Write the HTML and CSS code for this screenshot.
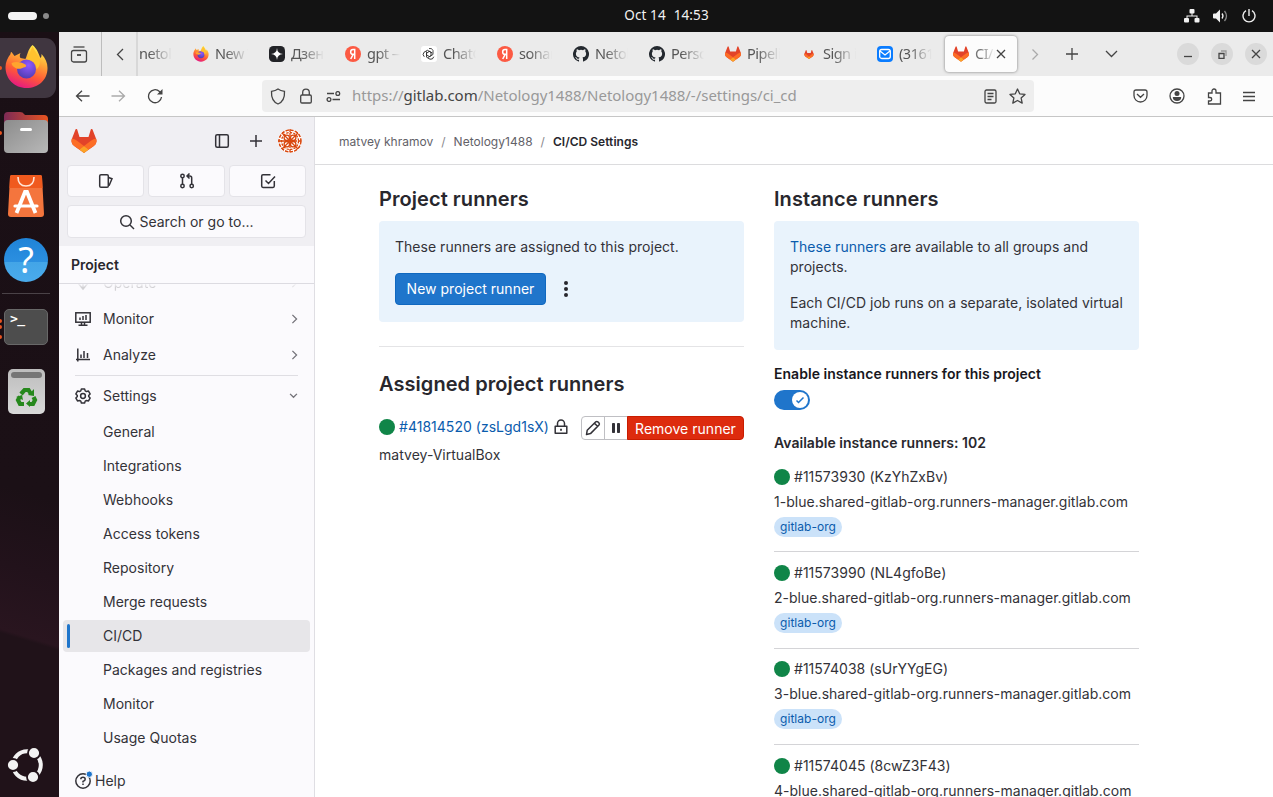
FILE: index.html
```html
<!DOCTYPE html>
<html lang="en">
<head>
<meta charset="utf-8">
<title>CI/CD Settings</title>
<link rel="stylesheet" href="styles.css">
</head>
<body>
<svg class="defs" width="0" height="0">
  <defs>
    <linearGradient id="flame" x1=".7" y1="0" x2=".3" y2="1"><stop offset="0" stop-color="#fff44f"/><stop offset=".35" stop-color="#ffa436"/><stop offset=".65" stop-color="#ff5a36"/><stop offset="1" stop-color="#e31587"/></linearGradient>
    <radialGradient id="globe" cx=".6" cy=".3" r=".8"><stop offset="0" stop-color="#9059ff"/><stop offset="1" stop-color="#4a3aa8"/></radialGradient>
    <linearGradient id="folder" x1="0" y1="0" x2="1" y2="1"><stop offset="0" stop-color="#8c8c8c"/><stop offset="1" stop-color="#b8b8b8"/></linearGradient>
    <linearGradient id="folderback"><stop offset="0" stop-color="#7d2a56"/><stop offset="1" stop-color="#e95420"/></linearGradient>
    <linearGradient id="bin" x1="0" y1="0" x2="0" y2="1"><stop offset="0" stop-color="#bdbdbd"/><stop offset="1" stop-color="#d9d9d9"/></linearGradient>
    <symbol id="firefox" viewBox="0 0 42 44">
      <path fill="url(#flame)" d="M27 0c5 4 6 9 8 13 1-1 1-2 1-4 4 4 6 9 6 14 0 12-9 20-21 20S0 34 0 22c0-5 2-9 5-13 0 0 0-2 1-2l3 4 6-3c-1 2-1 4 0 5l5 1c2-4 2-9 7-14z"/>
      <circle cx="21" cy="24" r="9.500" fill="url(#globe)"/>
      <path fill="#ffa52e" d="M6 18c4-2 10-1 13 1 2 1 2 2 1 3-4 1-6 3-10 1-2-1-4-3-4-5z"/>
      <path fill="#ffc22e" d="M20 14c5-4 5-9 7-13 2 5 5 8 7 13 1 4 0 8-3 10 0-6-4-9-11-10z"/>
    </symbol>
    <symbol id="gitlab" viewBox="0 0 25 24">
      <path fill="#e24329" d="M24.5 9.5 21 .5a.9.9 0 0 0-1.7.1L17 8H8L5.700.6A.9.9 0 0 0 4 .5L.5 9.500a6.500 6.500 0 0 0 2.200 7.500l9.800 7 9.800-7a6.500 6.500 0 0 0 2.200-7.500z"/>
      <path fill="#fc6d26" d="M24.500 9.500a12 12 0 0 0-4.700 2.100L12.500 17l4.700 3.600 5.100-3.600a6.500 6.500 0 0 0 2.200-7.500zM.5 9.500a12 12 0 0 1 4.700 2.100l7.300 5.400-4.700 3.600L2.700 17A6.500 6.500 0 0 1 .5 9.500z"/>
      <path fill="#fca326" d="m7.800 20.600 4.700 3.400 4.700-3.400-4.700-3.600z"/>
    </symbol>
    <symbol id="github" viewBox="0 0 16 16"><path fill="#24292f" d="M8 0a8 8 0 0 0-2.530 15.590c.4.070.55-.17.55-.38v-1.490c-2.230.48-2.700-.94-2.700-.94-.36-.92-.89-1.170-.89-1.170-.73-.5.060-.49.060-.49.800.060 1.230.83 1.230.83.710 1.220 1.870.87 2.330.66.070-.52.280-.87.500-1.070-1.770-.2-3.640-.890-3.640-3.950 0-.87.310-1.590.83-2.150-.09-.2-.36-1.020.07-2.120 0 0 .67-.21 2.200.82a7.600 7.600 0 0 1 4 0c1.530-1.040 2.200-.82 2.200-.82.440 1.100.160 1.920.080 2.120.51.560.82 1.270.82 2.150 0 3.070-1.870 3.750-3.650 3.950.29.250.54.730.54 1.480v2.200c0 .21.150.460.550.380A8 8 0 0 0 8 0z"/></symbol>
    <symbol id="yandex" viewBox="0 0 16 16"><circle cx="8" cy="8" r="8" fill="#fc5a43"/><path fill="none" stroke="#fff" stroke-width="1.500" d="M9.700 13V3.600H8a2.300 2.300 0 0 0 0 4.700h1.700M8.200 8.300 5.700 13"/></symbol>
    <symbol id="x" viewBox="0 0 10 10"><path d="m1 1 8 8M9 1 1 9"/></symbol>
    <symbol id="right" viewBox="0 0 8 12"><path d="m1.500 1 5 5-5 5"/></symbol>
    <symbol id="lock" viewBox="0 0 16 16"><rect x="2.700" y="7" width="10.600" height="8" rx="1.300"/><path d="M4.700 7V4.500a3.300 3.300 0 0 1 6.600 0V7"/></symbol>
  </defs>
</svg>
<div class="desktop">
  <header class="topbar">
    <div class="workspaces"><span class="pill"></span><span class="dot"></span></div>
    <div class="clock"><span>Oct 14</span><span>14:53</span></div>
    <div class="tray">
      <svg width="16" height="14" viewBox="0 0 16 14" fill="#f2f2f2"><rect x="5.500" y="0" width="5" height="4.500" rx="1"/><rect x="0" y="9" width="5" height="4.500" rx="1"/><rect x="10.500" y="9" width="5" height="4.500" rx="1"/><path d="M7.500 4h1v2.500h5V9h-1V7.500h-9V9h-1V6.500h5z"/></svg>
      <svg width="16" height="14" viewBox="0 0 16 14"><path fill="#f2f2f2" d="M1 4.500h2L7 .5v13l-4-4H1q-1 0-1-1v-3q0-1 1-1z"/><path fill="none" stroke="#f2f2f2" stroke-width="1.300" d="M9 4.500q2 2.500 0 5"/><path fill="none" stroke="#888" stroke-width="1.300" d="M11.500 2q4 5 0 10"/></svg>
      <svg width="14" height="14" viewBox="0 0 14 14" fill="none" stroke="#eee" stroke-width="1.400"><path d="M4 1.700a6 6 0 1 0 6 0M7 0v7"/></svg>
    </div>
  </header>
  <div class="main">
    <aside class="dock">
      <div class="app active"><svg width="43" height="44"><use href="#firefox"/></svg><i class="run"></i></div>
      <div class="app files"><svg width="44" height="42" viewBox="0 0 44 42"><path fill="url(#folderback)" d="M0 4q0-4 4-4h12q3 0 4 2l1 1h19q4 0 4 4v20H0z"/><rect x="0" y="8" width="44" height="33" rx="4" fill="url(#folder)"/><rect x="16" y="16" width="12" height="3" rx="1.500" fill="#fff"/></svg><i class="run"></i></div>
      <div class="app store"><svg width="36" height="42" viewBox="0 0 36 42"><path fill="#f4753d" d="M4 0h28q2 0 2 2l2 37q0 3-3 3H3q-3 0-3-3L2 2q0-2 2-2z"/><path fill="#f05a1e" d="M4 0h28q2 0 2 2l.5 11H1.500L2 2q0-2 2-2z"/><path fill="none" stroke="#ffe5d6" stroke-width="1.600" d="M10 2q0 9 8 9t8-9"/><path fill="none" stroke="#fff" stroke-width="3.800" d="M8.500 38 17 17h2l8.500 21"/><path stroke="#fff" stroke-width="3.200" stroke-linecap="round" d="M7 31h22"/></svg></div>
      <div class="app help-app"><span class="qmark">?</span></div>
      <hr class="dock-line">
      <div class="app term"><span class="prompt">&gt;_</span><i class="run r1"></i><i class="run"></i><i class="run r3"></i></div>
      <div class="app trash"><svg width="37" height="45" viewBox="0 0 37 45"><rect width="37" height="45" rx="5" fill="url(#bin)"/><rect x="3" y="3" width="31" height="6" rx="3" fill="#767676"/><g fill="none" stroke="#26881c" stroke-width="4.200"><path d="m13 25 3.500-4h4l2.500 4M25.500 28l1.500 3-2 4h-4M16 35h-4l-2-4 2-3.500"/></g><g fill="#26881c"><path d="m20 26 6 1V20zM22 31v7l-4-3.500zM8 28l6-2 1 5z"/></g></svg></div>
      <div class="app ubuntu"><svg width="38" height="38" viewBox="0 0 38 38"><circle cx="20" cy="19" r="13.800" fill="none" stroke="#f2f2f2" stroke-width="4"/><g fill="#f2f2f2" stroke="#201219" stroke-width="1.800"><circle cx="6" cy="19" r="6"/><circle cx="27" cy="7" r="6"/><circle cx="26" cy="31" r="6"/></g></svg></div>
    </aside>
    <section class="browser">
      <div class="tabbar">
        <div class="tab-tools"><svg class="line" width="18" height="17" viewBox="0 0 18 17"><path d="M3.500 1h11"/><rect x="1.500" y="4.500" width="15" height="11.500" rx="2"/><path d="M7 9h4" stroke-width="1.800"/></svg></div>
        <div class="scroll-left"><svg class="line" width="8" height="13" viewBox="0 0 8 13"><path d="m7 1-5.500 5.500L7 12"/></svg></div>
        <div class="tab first"><span class="label">netology</span></div>
        <div class="tab"><svg width="16" height="16"><use href="#firefox"/></svg><span class="label">New Tab</span></div>
        <div class="tab"><svg width="16" height="16" viewBox="0 0 16 16"><rect width="16" height="16" rx="4.500" fill="#222327"/><path fill="#fff" d="M8 2q.3 5.700 6 6-5.700.3-6 6-.3-5.700-6-6 5.700-.3 6-6z"/></svg><span class="label">Дзен —</span></div>
        <div class="tab"><svg width="16" height="16"><use href="#yandex"/></svg><span class="label">gpt — Я</span></div>
        <div class="tab"><svg width="16" height="16" viewBox="0 0 16 16"><rect width="16" height="16" rx="3" fill="#fff"/><g fill="none" stroke="#222" stroke-width=".8"><path id="petal" d="M8 2.500q3-.8 4 2v4L8.500 10.500 5.500 9V5.500"/><use href="#petal" transform="rotate(120 8 8)"/><use href="#petal" transform="rotate(240 8 8)"/></g></svg><span class="label">ChatGPT</span></div>
        <div class="tab"><svg width="16" height="16"><use href="#yandex"/></svg><span class="label">sonar</span></div>
        <div class="tab"><svg width="16" height="16"><use href="#github"/></svg><span class="label">Netology</span></div>
        <div class="tab"><svg width="16" height="16"><use href="#github"/></svg><span class="label">Personal</span></div>
        <div class="tab"><svg width="17" height="16"><use href="#gitlab"/></svg><span class="label">Pipelines</span></div>
        <div class="tab"><svg class="tiny" width="16" height="9"><use href="#gitlab"/></svg><span class="label">Sign in</span></div>
        <div class="tab"><svg width="16" height="16" viewBox="0 0 16 16"><rect width="16" height="16" rx="4" fill="#0a7cff"/><rect x="2.700" y="3.500" width="10.600" height="9" rx="2" fill="none" stroke="#fff" stroke-width="1.300"/><path d="m3 5 5 4 5-4" fill="none" stroke="#fff" stroke-width="1.300"/></svg><span class="label">(3161)</span></div>
        <div class="tab current"><svg width="17" height="16"><use href="#gitlab"/></svg><span class="label">CI/CD</span><svg class="line" width="10" height="10"><use href="#x"/></svg></div>
        <div class="tab-actions">
          <svg class="line pale" width="8" height="13"><use href="#right"/></svg>
          <svg class="line" width="12" height="12" viewBox="0 0 12 12"><path d="M6 0v12M0 6h12"/></svg>
          <svg class="line" width="13" height="8" viewBox="0 0 13 8"><path d="m1 1 5.500 5.500L12 1"/></svg>
        </div>
        <div class="win-buttons">
          <span><svg class="line" width="8" height="8" viewBox="0 0 8 8"><path d="M0 6.500h8"/></svg></span>
          <span><svg class="line" width="9" height="9" viewBox="0 0 9 9"><path d="M1 3.500h5v5H1z"/><path d="M3 1h5v5" stroke="#999"/></svg></span>
          <span><svg class="line" width="10" height="10"><use href="#x"/></svg></span>
        </div>
      </div>
      <div class="toolbar">
        <div class="nav-buttons">
          <svg class="line" width="15" height="12" viewBox="0 0 15 12"><path d="M14.500 6h-13M7 .7 1.500 6 7 11.300"/></svg>
          <svg class="line pale" width="15" height="12" viewBox="0 0 15 12"><path d="M.5 6h13M8 .7 13.500 6 8 11.300"/></svg>
          <svg class="line" width="16" height="16" viewBox="0 0 16 16"><path d="M14.500 9a6.500 6.500 0 1 1-2-5.500l1.500 1.500"/><path fill="#444" stroke="none" d="M15.500 1v5.500H10z"/></svg>
        </div>
        <div class="urlbar">
          <svg class="line" width="16" height="17" viewBox="0 0 16 17"><path d="M8 1c2 1.500 4 2 6.500 2.300C14.800 9 13 14 8 16 3 14 1.200 9 1.500 3.300 4 3 6 2.500 8 1z"/></svg>
          <svg class="line" width="16" height="16"><use href="#lock"/></svg>
          <svg class="line perm" width="15" height="11" viewBox="0 0 15 11"><path d="M1 2.500h7M6.500 8.500H14"/><circle cx="11.800" cy="2.500" r="1.900"/><circle cx="3" cy="8.500" r="1.900"/></svg>
          <span class="url">https://<b>gitlab.com</b>/Netology1488/Netology1488/-/settings/ci_cd</span>
          <svg class="line reader" width="13" height="15" viewBox="0 0 13 15"><rect x="1" y="1" width="11" height="13" rx="1.500"/><path d="M3.500 4.500h6M3.500 7.500h6M3.500 10.500h4"/></svg>
          <svg class="line star" width="17" height="16" viewBox="0 0 17 16"><path stroke-linejoin="round" d="m8.500 1 2.200 4.800 5.300.6-3.900 3.500 1.100 5.200-4.700-2.600-4.700 2.600 1.100-5.200L1 6.400l5.300-.6z"/></svg>
        </div>
        <div class="tool-icons">
          <svg class="line" width="15" height="14" viewBox="0 0 15 14"><path d="M1 3q0-2 2-2h9q2 0 2 2v3.500a6.500 6.500 0 0 1-13 0zM4 5l3.500 3.300L11 5"/></svg>
          <svg class="line" width="16" height="16" viewBox="0 0 16 16"><circle cx="8" cy="8" r="7"/><g fill="#444" stroke="none"><circle cx="8" cy="5.600" r="2.500"/><path d="M3.800 9h8.400q0 4-4.200 4T3.800 9z"/></g></svg>
          <svg class="line" width="15" height="17" viewBox="0 0 15 17"><path d="M1.500 7V5H5V3a2 2 0 0 1 4 0v2h4.500v11h-12v-3H3a1.700 1.700 0 0 0 0-3.500H1.500z"/></svg>
          <svg class="line" width="12" height="11" viewBox="0 0 12 11"><path d="M0 1.500h12M0 5.500h12M0 9.500h12"/></svg>
        </div>
      </div>
      <div class="page">
        <nav class="sidebar">
          <div class="side-top">
            <div class="side-row">
              <svg width="26" height="24"><use href="#gitlab"/></svg>
              <svg class="gl panel" width="16" height="16" viewBox="0 0 16 16"><rect x="1.700" y="1.700" width="12.600" height="12.600" rx="1.500"/><path d="M5.500 2v12"/></svg>
              <svg class="gl plus" width="12" height="12" viewBox="0 0 12 12"><path d="M6 0v12M0 6h12"/></svg>
              <svg class="avatar" width="24" height="24" viewBox="0 0 24 24" fill="none" stroke="#d9480f" stroke-width="1.300"><circle cx="12" cy="12" r="11" stroke-width="1.600" stroke-dasharray="3.500 1.200"/><circle cx="12" cy="12" r="8.500" stroke-dasharray="2.400 1.200"/><circle cx="8.800" cy="8.800" r="2.700"/><circle cx="15.200" cy="8.800" r="2.700"/><circle cx="8.800" cy="15.200" r="2.700"/><circle cx="15.200" cy="15.200" r="2.700"/><path d="M12 0v24M0 12h24" stroke-dasharray="3 1"/><path d="m4 4 16 16M20 4 4 20"/></svg>
            </div>
            <div class="quick">
              <span><svg class="gl" width="16" height="16" viewBox="0 0 16 16"><rect x="1.700" y="1.700" width="8.600" height="12.600" rx="1.300"/><path d="M10.500 4.500 14 5.800l-3 7"/></svg></span>
              <span><svg class="gl" width="16" height="16" viewBox="0 0 16 16"><circle cx="3.500" cy="3" r="1.700"/><circle cx="3.500" cy="13" r="1.700"/><circle cx="12.700" cy="13" r="1.700"/><path d="M3.500 5v6M12.700 11V5q0-2-2-2H8.500M10.500.5 8 3l2.500 2.500"/></svg></span>
              <span><svg class="gl" width="16" height="16" viewBox="0 0 16 16"><path d="M10.500 1.800H3q-1.300 0-1.300 1.300v10q0 1.300 1.300 1.300h10q1.300 0 1.300-1.300V8M5.500 7.500l3 3 6.500-7"/></svg></span>
            </div>
            <div class="search"><svg class="gl" width="16" height="16" viewBox="0 0 16 16"><circle cx="7" cy="7" r="5.300"/><path d="m11 11 4 4"/></svg><span>Search or go to...</span></div>
          </div>
          <div class="context">Project</div>
          <div class="menu">
            <div class="clip"><div class="item faded"><svg class="gl" width="16" height="16" viewBox="0 0 16 16"><path d="M1 4q7-5 14 0M3 8l5 6 5-6M8 6v8"/></svg><span>Operate</span><svg class="chev" width="7" height="10"><use href="#right"/></svg></div></div>
            <div class="item"><svg class="gl" width="16" height="16" viewBox="0 0 16 16"><rect x=".8" y="1.800" width="14.400" height="9.400"/><path d="M5 6.500V9M8 5v4M11 4v5M6.500 11v3M9.500 11v3M3.500 14.300h9"/></svg><span>Monitor</span><svg class="chev" width="7" height="10"><use href="#right"/></svg></div>
            <div class="item"><svg class="gl" width="16" height="16" viewBox="0 0 16 16"><path d="M2.800 1.500v13M1 12.500h14M6 7.500V11M9 4v7M12.500 6v5"/></svg><span>Analyze</span><svg class="chev" width="7" height="10"><use href="#right"/></svg></div>
            <div class="rule"></div>
            <div class="item"><svg class="gl" width="16" height="16" viewBox="0 0 16 16"><path stroke-linejoin="round" d="M6.400.9h3.200l.6 2 1.300.7 2-.5 1.600 2.800L13.700 7.400v1.200l1.400 1.500-1.600 2.800-2-.5-1.300.7-.6 2H6.400l-.6-2-1.300-.7-2 .5L.9 10.100l1.400-1.500V7.400L.9 5.900l1.600-2.800 2 .5 1.300-.7z"/><circle cx="8" cy="8" r="2.400"/></svg><span>Settings</span><svg class="chev" width="9" height="6" viewBox="0 0 10 7"><path d="m1 1 4 4 4-4"/></svg></div>
            <div class="sub">General</div>
            <div class="sub">Integrations</div>
            <div class="sub">Webhooks</div>
            <div class="sub">Access tokens</div>
            <div class="sub">Repository</div>
            <div class="sub">Merge requests</div>
            <div class="sub selected">CI/CD</div>
            <div class="sub">Packages and registries</div>
            <div class="sub">Monitor</div>
            <div class="sub">Usage Quotas</div>
          </div>
          <div class="help"><svg class="gl" width="18" height="20" viewBox="0 0 18 20"><circle cx="8" cy="11" r="7.200"/><path d="M5.800 9.300q0-2 2.200-2t2.200 1.900Q10.200 10.600 8 11.400v1"/><path d="M8 13.500V15"/><circle cx="14.300" cy="4.200" r="3.200" fill="#1f75cb" stroke="#fbfafd" stroke-width="1"/></svg><span>Help</span></div>
        </nav>
        <main class="content">
          <div class="crumbs"><span>matvey khramov</span><i>/</i><span>Netology1488</span><i>/</i><strong>CI/CD Settings</strong></div>
          <div class="columns">
            <section class="col">
              <h2>Project runners</h2>
              <div class="card">
                <p>These runners are assigned to this project.</p>
                <div class="card-actions"><span class="primary">New project runner</span><svg width="6" height="18" viewBox="0 0 6 18" fill="#28272d"><circle cx="3" cy="3" r="2"/><circle cx="3" cy="9" r="2"/><circle cx="3" cy="15" r="2"/></svg></div>
              </div>
              <div class="divider"></div>
              <h2>Assigned project runners</h2>
              <div class="assigned">
                <i class="status"></i><a>#41814520 (zsLgd1sX)</a>
                <svg class="gl lock" width="16" height="16" viewBox="0 0 16 16"><path d="M2.200 7.200h11.600v7H2.200zM4.500 7V4.500a3.500 3.500 0 0 1 7 0V7" stroke-linejoin="round"/><path d="M8 9.700v2" stroke-width="1.800"/></svg>
                <div class="group">
                  <span class="ghost"><svg class="gl" width="16" height="16" viewBox="0 0 16 16"><path stroke-linejoin="round" d="m1.500 14.500.7-4.200 8.600-8.500q1-.8 2 0l1.200 1.200q.8 1 0 2l-8.500 8.600zM9.500 3.300l3 3"/></svg></span>
                  <span class="ghost"><svg width="10" height="10" viewBox="0 0 10 10" fill="#333238"><rect x="1" width="3" height="10" rx=".8"/><rect x="6" width="3" height="10" rx=".8"/></svg></span>
                  <span class="danger">Remove runner</span>
                </div>
              </div>
              <p class="desc">matvey-VirtualBox</p>
            </section>
            <section class="col">
              <h2>Instance runners</h2>
              <div class="card wide">
                <p><a>These runners</a> are available to all groups and projects.</p>
                <p>Each CI/CD job runs on a separate, isolated virtual machine.</p>
              </div>
              <div class="toggle-label">Enable instance runners for this project</div>
              <div class="toggle"><span><svg width="10" height="10" viewBox="0 0 10 10" fill="none" stroke="#1f75cb" stroke-width="1.500"><path d="m1.500 5.500 2 2L8.500 2.500"/></svg></span></div>
              <h5>Available instance runners: 102</h5>
              <div class="runner"><div class="rid"><i class="status"></i>#11573930 (KzYhZxBv)</div><div class="rname">1-blue.shared-gitlab-org.runners-manager.gitlab.com</div><span class="tag">gitlab-org</span></div>
              <div class="runner"><div class="rid"><i class="status"></i>#11573990 (NL4gfoBe)</div><div class="rname">2-blue.shared-gitlab-org.runners-manager.gitlab.com</div><span class="tag">gitlab-org</span></div>
              <div class="runner"><div class="rid"><i class="status"></i>#11574038 (sUrYYgEG)</div><div class="rname">3-blue.shared-gitlab-org.runners-manager.gitlab.com</div><span class="tag">gitlab-org</span></div>
              <div class="runner"><div class="rid"><i class="status"></i>#11574045 (8cwZ3F43)</div><div class="rname">4-blue.shared-gitlab-org.runners-manager.gitlab.com</div><span class="tag">gitlab-org</span></div>
            </section>
          </div>
        </main>
      </div>
    </section>
  </div>
</div>
</body>
</html>
```
FILE: styles.css
```css
* { box-sizing: border-box; }
body { margin: 0; overflow: hidden; font-family: Inter, "Liberation Sans", sans-serif; font-size: 14px; line-height: 20px; color: #333238; letter-spacing: .02px; }
h2, h5, p { margin: 0; }
svg { display: block; flex: none; }
.defs { position: absolute; }
.desktop { width: 1273px; height: 797px; display: flex; flex-direction: column; overflow: hidden; background: #fff; }
.line { fill: none; stroke: #444; stroke-width: 1.3; }
.line.pale { stroke: #aaa; }
.gl { fill: none; stroke: #333238; stroke-width: 1.5; }

.topbar { flex: none; height: 32px; background: #131313; display: grid; grid-template-columns: 1fr auto 1fr; align-items: center; padding: 0 17px 0 8px; font-family: "Noto Sans", sans-serif; color: #f2f2f2; font-size: 13.5px; }
.workspaces { display: flex; align-items: center; gap: 6px; }
.pill { width: 29px; height: 8px; border-radius: 4px; background: #f4f4f4; }
.dot { width: 6px; height: 6px; border-radius: 3px; background: #8a8a8a; }
.clock { display: flex; gap: 8px; margin-left: 69px; letter-spacing: .1px; transform: translate(0, -1px); }
.tray { justify-self: end; display: flex; gap: 13px; align-items: center; }

.main { flex: 1; min-height: 0; display: flex; }
.dock { flex: none; width: 59px; background: linear-gradient(197deg, #1a0f15 0%, #1b1016 60%, #22121b 70%, #29151f 78.500%, #201219 79%, #201219 100%); display: flex; flex-direction: column; }
.app { position: relative; flex: none; width: 52px; display: flex; justify-content: center; }
.app.active { width: 56px; height: 60px; margin-top: 6px; padding: 7px 4px 0 0; border-radius: 0 11px 11px 0; background: #403640; }
.files { margin-top: 14px; }
.store { margin-top: 21px; }
.help-app { width: 44px; height: 44px; margin: 21px 0 0 4px; border-radius: 50%; background: linear-gradient(#1f83d8 0, #2b8fe0 54%, #43a5e7 55%, #4aabec 100%); align-items: center; }
.qmark { color: #fff; font: 36px "Noto Sans", sans-serif; line-height: 42px; }
.dock-line { width: 48px; height: 1px; border: 0; background: #4a4247; margin: 11px 0 15px 2px; }
.term { width: 44px; height: 36px; margin-left: 4px; border-radius: 5px; background: #4d4d4d; border: 1px solid #686868; justify-content: flex-start; }
.prompt { color: #fff; font: bold 13px "DejaVu Sans Mono", monospace; margin: 1px 0 0 5px; letter-spacing: -.7px; }
.trash { margin-top: 24px; }
.ubuntu { margin-top: auto; margin-bottom: 13px; }
.run { position: absolute; left: -2px; top: 50%; width: 4px; height: 4px; margin-top: -2px; border-radius: 2px; background: #e95420; }
.term .run { left: -7px; }
.term .r1 { top: 9px; margin: 0; }
.term .r3 { top: 25px; margin: 0; }

.browser { flex: 1; min-width: 0; display: flex; flex-direction: column; background: #fff; }
.tabbar { flex: none; height: 44px; display: flex; align-items: center; background: #ebebeb; font: 14.5px "Noto Sans", sans-serif; color: #555; }
.tab-tools { width: 43px; height: 44px; border-right: 1px solid #bdbdbd; display: grid; place-items: center; padding-right: 2px; }
.scroll-left { width: 36px; height: 44px; display: grid; place-items: center; border-right: 2px solid #d8d8d8; padding-left: 1px; }
.tab { width: 76px; flex: none; display: flex; align-items: center; gap: 6px; padding-left: 8px; }
.tab > svg:first-child { width: 16px; }
.tab.first { width: 47px; padding-left: 1px; }
.label { width: 33px; overflow: hidden; white-space: nowrap; letter-spacing: -.5px; transform: translate(0, -1px); -webkit-mask-image: linear-gradient(90deg, #000 30%, transparent); mask-image: linear-gradient(90deg, #000 30%, transparent); }
.tab.current { width: 72px; height: 36px; background: #fcfcfc; border-radius: 4px; box-shadow: 0 0 3px #777; }
.current .label { width: 20px; opacity: .8; margin-right: -5px; }
.tab-actions { display: flex; align-items: center; gap: 26px; margin-left: 14px; }
.tab-actions .pale { margin-right: 1px; }
.tab-actions svg:last-child { margin-left: 1px; }
.win-buttons { margin-left: auto; display: flex; gap: 12px; padding-right: 6px; }
.win-buttons span { width: 22px; height: 22px; border-radius: 50%; background: #dadada; display: grid; place-items: center; }

.toolbar { flex: none; height: 41px; background: #fcfcfc; border-bottom: 1px solid #c6c6c6; display: flex; align-items: center; }
.nav-buttons { display: flex; align-items: center; gap: 21px; margin-left: 16px; width: 187px; }
.urlbar { width: 772px; height: 32px; background: #eee; border-radius: 4px; display: flex; align-items: center; padding: 0 8px 0 8px; gap: 12px; }
.url { flex: 1; margin-left: -1px; font: 15px "Noto Sans", sans-serif; color: #999; white-space: nowrap; letter-spacing: -.02px; transform: translate(0, -1px); }
.url b { font-weight: 400; color: #444; }
.tool-icons { margin-left: auto; padding-right: 18px; display: flex; align-items: center; gap: 21.5px; }

.page { flex: 1; min-height: 0; display: flex; }
.sidebar { flex: none; width: 256px; background: #fbfafd; border-right: 1px solid #dfdee3; display: flex; flex-direction: column; }
.side-top { background: #f0eff3; height: 129px; flex: none; padding: 0 8px; }
.side-row { display: flex; align-items: center; height: 48px; padding: 0 4px 0 4px; }
.panel { margin-left: 117px; }
.plus { margin-left: 20px; }
.avatar { margin-left: 16px; border-radius: 50%; background: #fff; }
.quick { display: flex; gap: 4px; }
.quick span { flex: 1; height: 32px; background: #fbfafd; border: 1px solid #e4e3e8; border-radius: 4px; display: grid; place-items: center; }
.search { margin-top: 8px; height: 33px; background: #fbfafd; border: 1px solid #e4e3e8; border-radius: 4px; display: flex; align-items: center; justify-content: center; gap: 4px; }
.context { flex: none; height: 38px; border-bottom: 1px solid #dcdbe1; padding: 9px 12px; font-weight: 600; color: #28272d; }
.menu { padding: 0 4px; flex: none; }
.clip { height: 17px; margin-bottom: 2px; display: flex; flex-direction: column; justify-content: flex-end; overflow: hidden; }
.item { flex: none; height: 32px; margin-bottom: 4px; padding: 0 12px; display: flex; align-items: center; gap: 12px; }
.clip .item { height: 36px; margin-bottom: 0; opacity: .2; -webkit-mask-image: linear-gradient(transparent 50%, #000 62%); mask-image: linear-gradient(transparent 50%, #000 62%); }
.chev { margin-left: auto; fill: none; stroke: #737278; stroke-width: 1.5; overflow: visible; }
.rule { height: 1px; background: #dfdee3; margin: 2px 12px 4px; }
.sub { height: 32px; margin-bottom: 2px; padding: 6px 0 6px 40px; }
.sub.selected { position: relative; background: #e7e6e9; border-radius: 4px; }
.selected::before { content: ""; position: absolute; left: 4px; top: 4px; width: 3px; height: 24px; border-radius: 2px; background: #1f75cb; }
.help { display: flex; align-items: center; gap: 2px; margin: 15px 0 0 16px; }
.help svg { margin-top: -2px; }

.content { flex: 1; background: #fff; }
.crumbs { height: 48px; border-bottom: 1px solid #dcdcde; padding: 15px 0 0 24px; display: flex; gap: 8px; font-size: 12px; line-height: 20px; color: #626168; }
.crumbs i { font-style: normal; color: #89888d; }
.crumbs strong { font-weight: 600; color: #28272d; }
.columns { display: flex; gap: 30px; padding: 22px 0 0 64px; }
.col { width: 365px; }
h2 { font-size: 20px; line-height: 24px; font-weight: 600; color: #28272d; letter-spacing: .06px; }
.card { margin-top: 10px; height: 101px; background: #e9f3fc; border-radius: 4px; padding: 16px; }
.card.wide { height: 129px; }
.card p + p { margin-top: 16px; }
a { color: #0b5cad; }
.card-actions { display: flex; align-items: center; gap: 17px; margin-top: 16px; }
.primary { height: 32px; width: 151px; text-align: center; border-radius: 4px; border: 1px solid #1068bf; background: #1f75cb; color: #fff; line-height: 30px; white-space: nowrap; }
.divider { height: 1px; background: #e4e4e6; margin: 24px 0 25px; }
.assigned { display: flex; align-items: center; height: 24px; margin-top: 20px; white-space: nowrap; }
.status { width: 16px; height: 16px; border-radius: 50%; background: #108548; margin-right: 4px; flex: none; }
.assigned > .status, .assigned > a, .lock { transform: translate(0, -1px); }
.lock { margin-left: 4px; }
.group { margin-left: auto; display: flex; height: 24px; }
.ghost { width: 24px; border: 1px solid #bfbfc3; display: grid; place-items: center; margin-right: -1px; }
.ghost:first-child { border-radius: 4px 0 0 4px; }
.danger { width: 117px; background: #dd2b0e; border: 1px solid #c91c00; border-radius: 0 4px 4px 0; color: #fff; line-height: 23px; text-align: center; position: relative; }
.desc { margin-top: 5px; }
.toggle-label, h5 { font-size: 14px; line-height: 20px; font-weight: 600; color: #28272d; white-space: nowrap; letter-spacing: .03px; }
.toggle-label { margin-top: 14px; color: #18171d; }
.toggle { width: 36px; height: 20px; margin-top: 6px; border-radius: 10px; background: #1f75cb; padding: 2px; display: flex; justify-content: flex-end; }
.toggle span { width: 16px; height: 16px; border-radius: 50%; background: #fff; display: grid; place-items: center; }
h5 { margin: 23px 0 3px; }
.runner { height: 96.4px; padding-top: 10.6px; border-bottom: 1px solid #d4d4d7; }
.runner:first-of-type { margin-top: 0; }
.rid { display: flex; align-items: center; height: 20px; }
.rname { margin: 5px 0 5px; white-space: nowrap; }
.tag { display: block; width: 68px; height: 20px; border-radius: 10px; background: #cbe2f9; color: #0b5cad; font-size: 12px; line-height: 20px; text-align: center; }
```
